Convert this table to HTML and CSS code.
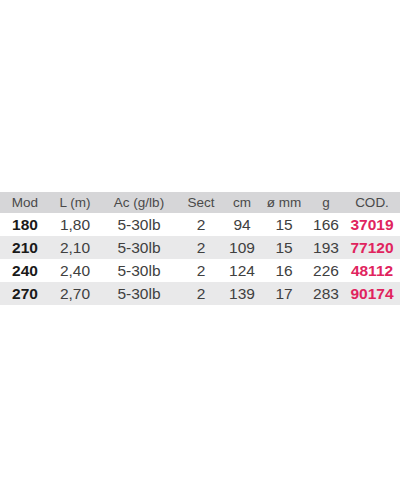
FILE: index.html
```html
<!DOCTYPE html>
<html>
<head>
<meta charset="utf-8">
<link rel="stylesheet" href="styles.css">
</head>
<body>
<div class="page">
  <table class="specs">
    <thead>
      <tr>
        <th class="c-mod">Mod</th>
        <th class="c-l">L (m)</th>
        <th class="c-ac">Ac (g/lb)</th>
        <th class="c-sect">Sect</th>
        <th class="c-cm">cm</th>
        <th class="c-mm">ø mm</th>
        <th class="c-g">g</th>
        <th class="c-cod">COD.</th>
      </tr>
    </thead>
    <tbody>
      <tr><td class="mod">180</td><td>1,80</td><td>5-30lb</td><td>2</td><td>94</td><td>15</td><td>166</td><td class="cod">37019</td></tr>
      <tr class="alt"><td class="mod">210</td><td>2,10</td><td>5-30lb</td><td>2</td><td>109</td><td>15</td><td>193</td><td class="cod">77120</td></tr>
      <tr><td class="mod">240</td><td>2,40</td><td>5-30lb</td><td>2</td><td>124</td><td>16</td><td>226</td><td class="cod">48112</td></tr>
      <tr class="alt"><td class="mod">270</td><td>2,70</td><td>5-30lb</td><td>2</td><td>139</td><td>17</td><td>283</td><td class="cod">90174</td></tr>
    </tbody>
  </table>
</div>
</body>
</html>
```
FILE: styles.css
```css
html, body {
  margin: 0;
  padding: 0;
  background: #ffffff;
}
.page {
  width: 400px;
  height: 500px;
  padding-top: 192px;
  box-sizing: border-box;
}
.specs {
  width: 400px;
  border-collapse: collapse;
  table-layout: fixed;
  font-family: "Liberation Sans", Arial, sans-serif;
  color: #3a3a3a;
}
.specs th {
  background: #d6d6d8;
  font-weight: normal;
  font-size: 13.5px;
  color: #4a4a4a;
  height: 21px;
  padding: 0;
  text-align: center;
}
.specs td {
  font-size: 15.5px;
  height: 23px;
  padding: 0;
  text-align: center;
  color: #404040;
}
.specs tr.alt td {
  background: #e9e9ea;
}
.specs td.mod {
  font-weight: bold;
  color: #1a1a1a;
}
.specs td.cod {
  font-weight: bold;
  color: #e0245e;
}
.c-mod { width: 50px; }
.c-l { width: 50px; }
.c-ac { width: 78px; }
.c-sect { width: 46px; }
.c-cm { width: 36px; }
.c-mm { width: 48px; }
.c-g { width: 36px; }
.c-cod { width: 56px; }
```
